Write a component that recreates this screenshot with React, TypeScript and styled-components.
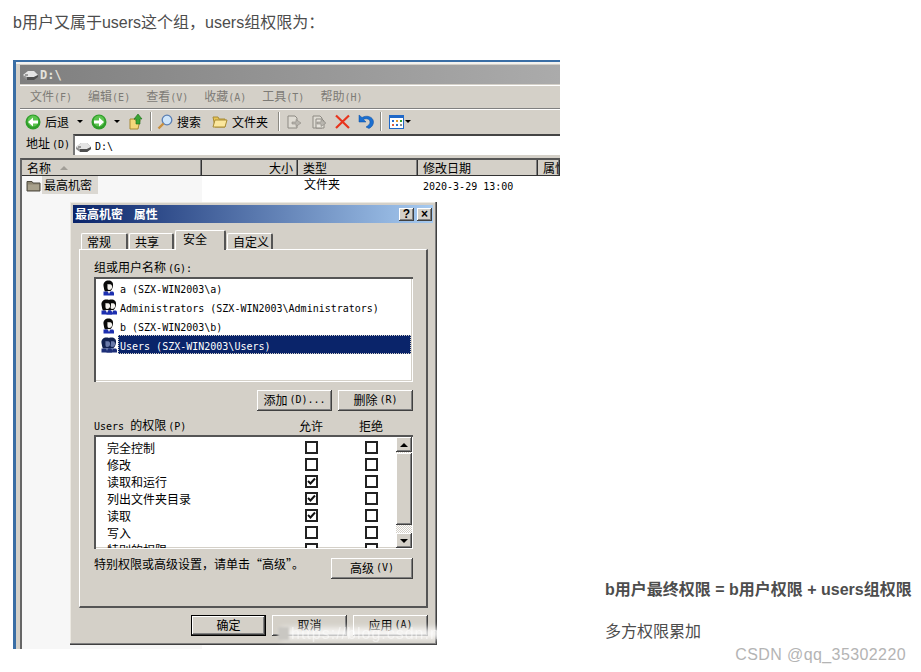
import React from 'react'
import styled, {createGlobalStyle} from 'styled-components'

const cjk = '"Noto Sans CJK SC", sans-serif'
const face = '#d4d0c8'

const raised = `
  box-shadow: inset -1px -1px 0 #404040, inset 1px 1px 0 #fff, inset -2px -2px 0 #808080;
`
const sunken = `
  box-shadow: inset 2px 2px 0 #555, inset -1px -1px 0 #fff, inset -2px -2px 0 ${face};
`

const GlobalStyle = createGlobalStyle`
  html, body {
    margin: 0;
    background: #fff;
  }
`

const Page = styled.div`
  position: relative;
  width: 921px;
  height: 672px;
  overflow: hidden;
  padding-left: 13px;
  box-sizing: border-box;
  color: #4d4d4d;
  font: 16px/26px "Liberation Sans", ${cjk};
`

const Lead = styled.p`
  margin: 0;
  padding: 10px 0 24px;
`

const Body = styled.div`
  display: flex;
`

const Side = styled.div`
  display: flex;
  flex-direction: column;
  justify-content: flex-end;
  gap: 16px;
  margin-left: 45px;
  padding-bottom: 4px;
  white-space: nowrap;
`

const Strong = styled.div`
  font-weight: 700;
`

const Credit = styled.div`
  position: absolute;
  right: 15px;
  top: 642px;
  color: #b4b4b4;
  font-size: 16px;
  letter-spacing: 0.4px;
`

const Shot = styled.div`
  position: relative;
  flex: 0 0 547px;
  height: 589px;
  box-sizing: border-box;
  overflow: hidden;
  border-top: 2px solid #3a6ea5;
  border-left: 3px solid #3a6ea5;
  font: 12px/14px ${cjk};
  color: #000;
`

const ExplorerWindow = styled.div`
  display: flex;
  flex-direction: column;
  height: 100%;
  box-sizing: border-box;
  padding: 1px 0 0 4px;
  background: ${face};
  border-top: 2px solid #f4f3f0;
`

const TitleBar = styled.div`
  display: flex;
  align-items: center;
  gap: 1px;
  flex: 0 0 19px;
  padding-left: 2px;
  background: linear-gradient(90deg, #7f7f7f, #ababab);
  color: #e4e2dc;
  font: 700 12px/14px "DejaVu Sans Mono", monospace;
`

const MenuBar = styled.div`
  display: flex;
  align-items: center;
  gap: 16px;
  height: 24px;
  margin-top: 1px;
  padding-left: 10px;
  box-sizing: border-box;
  border-top: 1px solid #fff;
  border-bottom: 1px solid #808080;
  color: #7d7b76;
`

const Toolbar = styled.div`
  display: flex;
  align-items: center;
  height: 24px;
  padding-left: 5px;
  box-sizing: border-box;
  border-top: 1px solid #fff;
`

const ToolText = styled.span`
  margin-left: 4px;
`

const ToolIcon = styled.span<{$gap?: number}>`
  display: flex;
  margin-left: ${({$gap}) => $gap ?? 0}px;
`

const Caret = styled.span<{$gap: number}>`
  width: 0;
  height: 0;
  margin-left: ${({$gap}) => $gap}px;
  border: 3px solid transparent;
  border-top: 3px solid #000;
  border-bottom: 0;
`

const ToolSep = styled.span<{$gap: number}>`
  width: 1px;
  height: 19px;
  margin-left: ${({$gap}) => $gap}px;
  background: #8b8982;
  box-shadow: 1px 0 0 #fff;
`

const AddressRow = styled.div`
  display: flex;
  align-items: stretch;
  height: 21px;
  margin-top: 1px;
`

const AddressLabel = styled.div`
  flex: 0 0 53px;
  padding: 2px 0 0 6px;
  box-sizing: border-box;
  white-space: nowrap;
`

const AddressField = styled.div`
  display: flex;
  align-items: center;
  gap: 3px;
  flex: 1;
  padding: 2px 0 0 0;
  background: #fff;
  border-top: 2px solid #444;
  border-left: 2px solid #777;
`

const ListFrame = styled.div`
  display: flex;
  flex-direction: column;
  flex: 1;
  min-height: 0;
  margin-top: 3px;
  border-top: 2px solid #555;
  border-left: 2px solid #666;
`

const ListHeader = styled.div`
  display: grid;
  grid-template-columns: 180px 96px 120px 120px 1fr;
  height: 16px;
  box-sizing: border-box;
  border-bottom: 1px solid #333;
`

const HeaderCell = styled.div<{$end?: boolean}>`
  display: flex;
  align-items: center;
  justify-content: ${({$end}) => ($end ? 'flex-end' : 'flex-start')};
  gap: 9px;
  padding: 0 ${({$end}) => ($end ? 4 : 0)}px 0 5px;
  box-sizing: border-box;
  overflow: hidden;
  white-space: nowrap;
  border-right: 1px solid #333;
  box-shadow: inset -1px 0 0 #808080;
`

const SortMark = styled.span`
  width: 0;
  height: 0;
  border: 4px solid transparent;
  border-top: 0;
  border-bottom: 4px solid #a19e97;
`

const ListBody = styled.div`
  display: flex;
  flex: 1;
  background: #fff;
`

const NameColumn = styled.div`
  flex: 0 0 180px;
  padding: 0 0 0 4px;
  box-sizing: border-box;
  background: #f7f7f7;
`

const NameCell = styled.div`
  display: flex;
  align-items: center;
  gap: 1px;
  height: 18px;
`

const NameText = styled.span`
  padding: 0 6px 0 2px;
  line-height: 18px;
  background: #dbd8d2;
`

const TypeCell = styled.div`
  flex: 0 0 221px;
  padding: 1px 0 0 102px;
  box-sizing: border-box;
  white-space: nowrap;
`

const DateCell = styled.div`
  padding-top: 2px;
  white-space: nowrap;
`

const Lat = styled.span`
  font: 10px/14px "DejaVu Sans Mono", monospace;
`

const KeyHint = styled(Lat)`
  margin-left: 2px;
`

/* Properties dialog floats over the explorer window */
const Dialog = styled.div`
  position: absolute;
  left: 54px;
  top: 140px;
  width: 367px;
  height: 443px;
  padding: 3px;
  box-sizing: border-box;
  background: ${face};
  box-shadow: inset -1px -1px 0 #404040, inset -2px -2px 0 #808080, inset 1px 1px 0 #ece9e2;
`

const DialogTitle = styled.div`
  display: flex;
  align-items: center;
  justify-content: space-between;
  width: 360px;
  height: 18px;
  padding: 0 1px 0 2px;
  box-sizing: border-box;
  background: linear-gradient(90deg, #0a246a, #a6caf0);
  color: #fff;
  font-weight: 700;
  word-spacing: 8px;
`

const CaptionButtons = styled.div`
  display: flex;
  gap: 3px;
`

const CaptionButton = styled.div`
  display: flex;
  align-items: center;
  justify-content: center;
  width: 15px;
  height: 13px;
  background: ${face};
  color: #000;
  font: 700 12px/13px "Liberation Sans", sans-serif;
  ${raised}
`

const TabStrip = styled.div`
  display: flex;
  align-items: flex-end;
  gap: 1px;
  height: 19px;
  margin: 7px 0 0 8px;
`

const Tab = styled.div<{$active?: boolean; $width: number}>`
  position: relative;
  z-index: ${({$active}) => ($active ? 1 : 0)};
  display: flex;
  align-items: center;
  width: ${({$width}) => $width}px;
  height: ${({$active}) => ($active ? 20 : 16)}px;
  margin-bottom: ${({$active}) => ($active ? -1 : 0)}px;
  padding: 0 0 ${({$active}) => ($active ? 3 : 0)}px ${({$active}) => ($active ? 7 : 5)}px;
  box-sizing: border-box;
  background: ${face};
  border-radius: 2px 2px 0 0;
  border-top: 1px solid #fff;
  border-left: 1px solid #fff;
  border-right: 2px solid #555;
  white-space: nowrap;
`

const TabPanel = styled.div`
  width: 349px;
  height: 359px;
  margin-left: 6px;
  padding: 10px 0 0 14px;
  box-sizing: border-box;
  border-top: 1px solid #fff;
  border-left: 1px solid #fff;
  border-right: 2px solid #555;
  border-bottom: 2px solid #555;
`

const FieldLabel = styled.div`
  height: 14px;
  white-space: nowrap;
`

const UserList = styled.div`
  width: 319px;
  height: 105px;
  margin-top: 3px;
  padding: 1px 1px 0 6px;
  box-sizing: border-box;
  background: #fff;
  ${sunken}
`

const UserRow = styled.div`
  display: flex;
  align-items: center;
  height: 19px;
`

const UserSlot = styled.span`
  display: flex;
  flex: 0 0 18px;
`

const UserName = styled.span<{$selected?: boolean}>`
  flex: 1;
  height: 19px;
  padding-left: 2px;
  line-height: 19px;
  white-space: pre;
  margin-right: 1px;
  color: ${({$selected}) => ($selected ? '#fff' : '#000')};
  background: ${({$selected}) => ($selected ? '#0a246a' : 'transparent')};
  outline: ${({$selected}) => ($selected ? '1px dotted #d4d0c8' : 'none')};
  outline-offset: -1px;
`

const ButtonRow = styled.div`
  display: flex;
  justify-content: flex-end;
  gap: 6px;
  width: 319px;
  margin-top: 8px;
`

const WinButton = styled.div<{$width?: number; $default?: boolean}>`
  display: flex;
  align-items: center;
  justify-content: center;
  flex: 0 0 ${({$width}) => $width ?? 75}px;
  height: 21px;
  padding-bottom: 2px;
  box-sizing: border-box;
  white-space: pre;
  background: ${face};
  border: ${({$default}) => ($default ? '1px solid #000' : '0')};
  ${raised}
`

const PermHead = styled.div`
  display: grid;
  grid-template-columns: 187px 60px 60px;
  align-items: center;
  height: 14px;
  margin-top: 7px;
  white-space: pre;
`

const HeadCenter = styled.span`
  text-align: center;
`

const PermList = styled.div`
  display: flex;
  width: 319px;
  height: 114px;
  margin-top: 3px;
  padding: 2px 1px 1px 2px;
  box-sizing: border-box;
  background: #fff;
  ${sunken}
`

const PermScroll = styled.div`
  flex: 1;
  overflow: hidden;
  padding-top: 2px;
`

const PermRow = styled.div`
  display: grid;
  grid-template-columns: 185px 60px 60px;
  align-items: center;
  height: 17px;
`

const PermName = styled.span`
  padding-left: 11px;
`

const CheckBox = styled.span`
  justify-self: center;
  display: flex;
  align-items: center;
  justify-content: center;
  width: 13px;
  height: 13px;
  box-sizing: border-box;
  background: #fff;
  border: 2px solid #222;
`

const Scrollbar = styled.div`
  display: flex;
  flex-direction: column;
  flex: 0 0 16px;
  background: repeating-conic-gradient(#d4d0c8 0 25%, #fff 0 50%) 0 0 / 2px 2px;
`

const ScrollButton = styled.div`
  display: flex;
  align-items: center;
  justify-content: center;
  flex: 0 0 15px;
  background: ${face};
  ${raised}
`

const ScrollThumb = styled.div`
  flex: 0 0 72px;
  margin: 1px 0 8px;
  background: ${face};
  ${raised}
`

const Arrow = styled.span<{$down?: boolean}>`
  width: 0;
  height: 0;
  border: 4px solid transparent;
  border-top: ${({$down}) => ($down ? '4px solid #000' : '0')};
  border-bottom: ${({$down}) => ($down ? '0' : '4px solid #000')};
`

const NoteRow = styled.div`
  display: flex;
  justify-content: space-between;
  width: 319px;
  margin-top: 9px;
`

const Note = styled.span`
  margin-top: -1px;
  white-space: nowrap;
`

const Footer = styled.div`
  display: flex;
  justify-content: flex-end;
  gap: 6px;
  width: 349px;
  margin: 7px 0 0 6px;
`

/* Smudged-out image watermark lying over the bottom edge of the picture */
const Smudge = styled.div`
  position: absolute;
  left: 265px;
  top: 566px;
  width: 272px;
  height: 11px;
  background: rgba(255, 255, 255, 0.82);
  filter: blur(3px);
`

const SmudgeBlock = styled.div`
  position: absolute;
  left: 262px;
  top: 565px;
  width: 11px;
  height: 13px;
  background: #c9c7c2;
  filter: blur(1px);
`

const SmudgeText = styled.div`
  position: absolute;
  left: 275px;
  top: 563px;
  color: rgba(255, 255, 255, 0.5);
  font: 16px/18px "Liberation Sans", sans-serif;
  letter-spacing: 1px;
  filter: blur(0.6px);
  white-space: nowrap;
`

const DriveIcon = () => (
  <svg width="17" height="12" viewBox="0 0 17 12">
    <path d="M1 6 6 2h6l4 4v2l-4 3H5L1 8z" fill="#8f8f8f" />
    <path d="M1 6 6 2h6l4 4-4 2H5z" fill="#e4e4e4" />
    <path d="M5 8h7l4-2v2l-4 3H5z" fill="#4f4f4f" />
    <path d="M3 6h3" stroke="#555" />
  </svg>
)

const NavIcon = ({forward}: {forward?: boolean}) => (
  <svg width="16" height="16" viewBox="0 0 16 16">
    <circle cx="8" cy="8" r="7.5" fill="#2f9e2a" />
    <circle cx="8" cy="7" r="5.5" fill="#5cc44f" />
    <g transform={forward ? 'translate(16 0) scale(-1 1)' : undefined}>
      <path d="M3 8 8 3.500V6.500h5v3H8v3z" fill="#fff" />
    </g>
  </svg>
)

const UpIcon = () => (
  <svg width="15" height="17" viewBox="0 0 15 17">
    <path d="M1 6h4l1 1h5l-2 9H1z" fill="#f4d77a" stroke="#a88a35" />
    <path d="M9 1l4 5h-2v5H7V6H5z" fill="#3aa535" stroke="#1c6d1a" strokeWidth=".6" />
  </svg>
)

const SearchIcon = () => (
  <svg width="16" height="16" viewBox="0 0 16 16">
    <circle cx="10" cy="6" r="4.800" fill="#cfe6fb" stroke="#5a7fb4" strokeWidth="1.300" />
    <path d="M6.500 9.500 1.500 14.500" stroke="#c98f3e" strokeWidth="2.400" />
  </svg>
)

const FolderOpenIcon = () => (
  <svg width="16" height="15" viewBox="0 0 16 15">
    <path d="M1 3h5l1 2h6v8H3z" fill="#e8c556" stroke="#a98c34" />
    <path d="M3 6h12l-2 7H1z" fill="#fbe79d" stroke="#a98c34" />
  </svg>
)

const GhostIcon = ({copy}: {copy?: boolean}) => (
  <svg width="16" height="16" viewBox="0 0 16 16">
    <path d="M2 2h7l2 2v10H2z" fill="#dedbd3" stroke="#8d8a83" />
    {copy && <path d="M5 5h6l2 2v7H5z" fill="#e6e3dc" stroke="#8d8a83" />}
    <path d="M6 8h4V5.500L15 9l-5 3.500V10H6z" fill="#b8b5ae" stroke="#8d8a83" strokeWidth=".6" />
  </svg>
)

const DeleteIcon = () => (
  <svg width="15" height="15" viewBox="0 0 15 15">
    <path d="M1 1.500 14 14M14 1.500 1 14" stroke="#e8341c" strokeWidth="2.200" />
  </svg>
)

const UndoIcon = () => (
  <svg width="16" height="15" viewBox="0 0 16 15">
    <path d="M1 1v7h7L5.500 5.500C8 4 12 5 12 8c0 2-1.500 3.500-4 5l3 1.500c3-1.500 4.500-4 4.500-6.500C15.500 3 9 .5 4 3.500z" fill="#1a6fd1" stroke="#0f4c9c" strokeWidth=".5" />
  </svg>
)

const ViewsIcon = () => (
  <svg width="15" height="14" viewBox="0 0 15 14">
    <rect x=".5" y=".5" width="14" height="13" fill="#fff" stroke="#1f68c8" />
    <rect x="1" y="1" width="13" height="2" fill="#1f68c8" />
    <path d="M3 5h2v2H3z" fill="#2c6fce" />
    <path d="M7 5h2v2H7z" fill="#e09a2a" />
    <path d="M11 5h2v2h-2z" fill="#2f9e2a" />
    <path d="M3 9h2v2H3z" fill="#e2603a" />
    <path d="M7 9h2v2H7z" fill="#2c6fce" />
    <path d="M11 9h2v2h-2z" fill="#8a8a8a" />
  </svg>
)

const FolderIcon = () => (
  <svg width="15" height="13" viewBox="0 0 15 13">
    <path d="M1 2.500h5l1 1.500h7v8H1z" fill="#8d8672" stroke="#4f4b40" />
    <path d="M2 5.500h11v5.500H2z" fill="#a8a18c" />
  </svg>
)

const Person = ({x, body, hair, skin}: {x: number; body: string; hair: string; skin: string}) => (
  <g transform={`translate(${x} 0)`}>
    <path d="M1.500 6C1 2.500 3.500.5 6.500.5S11.500 2.500 11 5.500 10 9.500 8 11.500H3C2 10 2 8 1.500 6z" fill={hair} />
    <path d="M5.500 4c2 .5 4-.5 4.500 2S9 10 7 10 5.500 6.500 5.500 4z" fill={skin} />
    <path d="M1.500 11.500h9.500l1 1v3H1.500z" fill={body} />
    <path d="M5.500 11h3l-1.500 3z" fill={skin} />
  </g>
)

const UserIcon = ({group, selected}: {group?: boolean; selected?: boolean}) => {
  const colors = selected
    ? {body: '#1d2f78', hair: '#10204f', skin: '#6878a8'}
    : {body: '#1c2fb0', hair: '#0a0a0a', skin: '#f4f2ee'}
  return (
    <svg width="17" height="16" viewBox="0 0 17 16">
      {group && <Person x={5} {...colors} />}
      <Person x={group ? 0 : 2} {...colors} />
    </svg>
  )
}

const Tick = () => (
  <svg width="9" height="9" viewBox="0 0 9 9">
    <path d="M1 4l2.500 2.500L8 1.500" fill="none" stroke="#111" strokeWidth="2" />
  </svg>
)

const menus = [
  ['文件', '(F)'],
  ['编辑', '(E)'],
  ['查看', '(V)'],
  ['收藏', '(A)'],
  ['工具', '(T)'],
  ['帮助', '(H)'],
]

const users = [
  {name: 'a (SZX-WIN2003\\a)'},
  {name: 'Administrators (SZX-WIN2003\\Administrators)', group: true},
  {name: 'b (SZX-WIN2003\\b)'},
  {name: 'Users (SZX-WIN2003\\Users)', group: true, selected: true},
]

const permissions = [
  {name: '完全控制'},
  {name: '修改'},
  {name: '读取和运行', allowed: true},
  {name: '列出文件夹目录', allowed: true},
  {name: '读取', allowed: true},
  {name: '写入'},
  {name: '特别的权限'},
]

export default function App() {
  return (
    <>
      <GlobalStyle />
      <Page>
        <Lead>b用户又属于users这个组，users组权限为：</Lead>
        <Body>
          <Shot>
            <ExplorerWindow>
              <TitleBar>
                <DriveIcon />
                D:\
              </TitleBar>
              <MenuBar>
                {menus.map(([label, key]) => (
                  <span key={key}>
                    {label}
                    <Lat>{key}</Lat>
                  </span>
                ))}
              </MenuBar>
              <Toolbar>
                <NavIcon />
                <ToolText>后退</ToolText>
                <Caret $gap={8} />
                <ToolIcon $gap={8}>
                  <NavIcon forward />
                </ToolIcon>
                <Caret $gap={7} />
                <ToolIcon $gap={9}>
                  <UpIcon />
                </ToolIcon>
                <ToolSep $gap={6} />
                <ToolIcon $gap={6}>
                  <SearchIcon />
                </ToolIcon>
                <ToolText>搜索</ToolText>
                <ToolIcon $gap={11}>
                  <FolderOpenIcon />
                </ToolIcon>
                <ToolText>文件夹</ToolText>
                <ToolSep $gap={10} />
                <ToolIcon $gap={7}>
                  <GhostIcon />
                </ToolIcon>
                <ToolIcon $gap={9}>
                  <GhostIcon copy />
                </ToolIcon>
                <ToolIcon $gap={8}>
                  <DeleteIcon />
                </ToolIcon>
                <ToolIcon $gap={8}>
                  <UndoIcon />
                </ToolIcon>
                <ToolSep $gap={6} />
                <ToolIcon $gap={8}>
                  <ViewsIcon />
                </ToolIcon>
                <Caret $gap={1} />
              </Toolbar>
              <AddressRow>
                <AddressLabel>
                  地址<KeyHint>(D)</KeyHint>
                </AddressLabel>
                <AddressField>
                  <DriveIcon />
                  <Lat>D:\</Lat>
                </AddressField>
              </AddressRow>
              <ListFrame>
                <ListHeader>
                  <HeaderCell>
                    名称
                    <SortMark />
                  </HeaderCell>
                  <HeaderCell $end>大小</HeaderCell>
                  <HeaderCell>类型</HeaderCell>
                  <HeaderCell>修改日期</HeaderCell>
                  <HeaderCell>属性</HeaderCell>
                </ListHeader>
                <ListBody>
                  <NameColumn>
                    <NameCell>
                      <FolderIcon />
                      <NameText>最高机密</NameText>
                    </NameCell>
                  </NameColumn>
                  <TypeCell>文件夹</TypeCell>
                  <DateCell>
                    <Lat>2020-3-29 13:00</Lat>
                  </DateCell>
                </ListBody>
              </ListFrame>
            </ExplorerWindow>

            <Dialog>
              <DialogTitle>
                <span>最高机密 属性</span>
                <CaptionButtons>
                  <CaptionButton>?</CaptionButton>
                  <CaptionButton>×</CaptionButton>
                </CaptionButtons>
              </DialogTitle>
              <TabStrip>
                <Tab $width={47}>常规</Tab>
                <Tab $width={45}>共享</Tab>
                <Tab $width={51} $active>
                  安全
                </Tab>
                <Tab $width={46}>自定义</Tab>
              </TabStrip>
              <TabPanel>
                <FieldLabel>
                  组或用户名称<KeyHint>(G):</KeyHint>
                </FieldLabel>
                <UserList>
                  {users.map(user => (
                    <UserRow key={user.name}>
                      <UserSlot>
                        <UserIcon group={user.group} selected={user.selected} />
                      </UserSlot>
                      <UserName $selected={user.selected}>
                        <Lat>{user.name}</Lat>
                      </UserName>
                    </UserRow>
                  ))}
                </UserList>
                <ButtonRow>
                  <WinButton>
                    添加<KeyHint>(D)...</KeyHint>
                  </WinButton>
                  <WinButton>
                    删除<KeyHint>(R)</KeyHint>
                  </WinButton>
                </ButtonRow>
                <PermHead>
                  <span>
                    <Lat>Users </Lat>的权限<KeyHint>(P)</KeyHint>
                  </span>
                  <HeadCenter>允许</HeadCenter>
                  <HeadCenter>拒绝</HeadCenter>
                </PermHead>
                <PermList>
                  <PermScroll>
                    {permissions.map(perm => (
                      <PermRow key={perm.name}>
                        <PermName>{perm.name}</PermName>
                        <CheckBox>{perm.allowed && <Tick />}</CheckBox>
                        <CheckBox />
                      </PermRow>
                    ))}
                  </PermScroll>
                  <Scrollbar>
                    <ScrollButton>
                      <Arrow />
                    </ScrollButton>
                    <ScrollThumb />
                    <ScrollButton>
                      <Arrow $down />
                    </ScrollButton>
                  </Scrollbar>
                </PermList>
                <NoteRow>
                  <Note>特别权限或高级设置，请单击“高级”。</Note>
                  <WinButton $width={82}>
                    高级<KeyHint>(V)</KeyHint>
                  </WinButton>
                </NoteRow>
              </TabPanel>
              <Footer>
                <WinButton $default>确定</WinButton>
                <WinButton>取消</WinButton>
                <WinButton>
                  应用<KeyHint>(A)</KeyHint>
                </WinButton>
              </Footer>
            </Dialog>
            <Smudge />
            <SmudgeBlock />
            <SmudgeText>https://blog.csdn.net</SmudgeText>
          </Shot>
          <Side>
            <Strong>b用户最终权限 = b用户权限 + users组权限</Strong>
            <div>多方权限累加</div>
          </Side>
        </Body>
        <Credit>CSDN @qq_35302220</Credit>
      </Page>
    </>
  )
}
